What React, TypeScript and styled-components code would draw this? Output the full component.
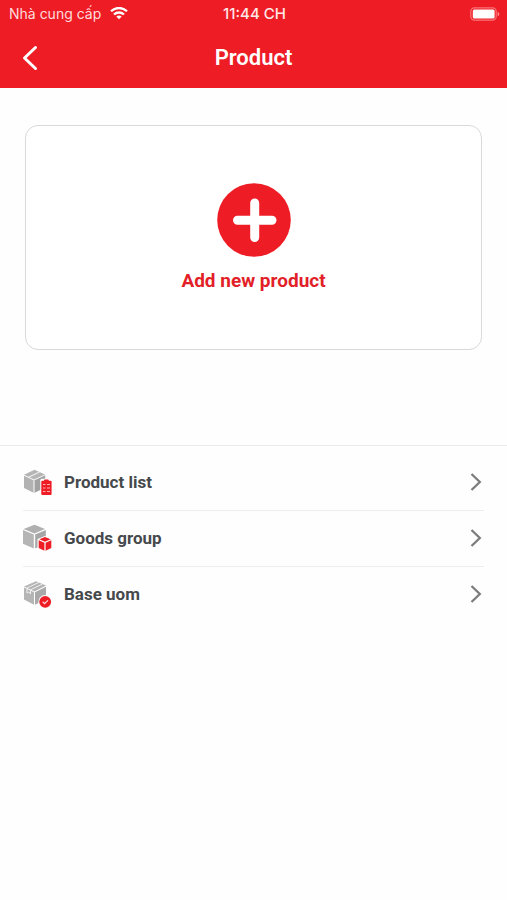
import React from "react";
import styled, { createGlobalStyle } from "styled-components";

const GlobalStyle = createGlobalStyle`
  * { box-sizing: border-box; }
  body {
    margin: 0;
    background: #fefefe;
    font-family: Roboto, "Liberation Sans", sans-serif;
  }
`;

const Header = styled.header`
  background: #ee1d25;
  color: #fff;
  padding-bottom: 8px;
`;

const StatusBar = styled.div`
  display: grid;
  grid-template-columns: 1fr auto 1fr;
  align-items: center;
  height: 28px;
  padding: 0 7px 0 9px;
  font: 400 14px/20px Inter, sans-serif;
`;

const Carrier = styled.span`
  display: flex;
  align-items: center;
  gap: 9px;
  color: #ffdcdc;
  white-space: nowrap;
`;

const Clock = styled.time`
  font-size: 15px;
  font-weight: 500;
  color: #ffe8e8;
`;

const Battery = styled.svg`
  justify-self: end;
`;

const TitleBar = styled.div`
  display: grid;
  grid-template-columns: 40px 1fr 40px;
  align-items: center;
  padding: 7px 10px 0;
`;

const IconButton = styled.button`
  display: grid;
  place-items: center;
  width: 40px;
  height: 45px;
  padding: 0;
  border: 0;
  background: none;
  color: inherit;
  cursor: pointer;
`;

const Title = styled.h1`
  margin: 0;
  font-size: 22px;
  line-height: 28px;
  font-weight: 600;
  text-align: center;
`;

const AddCard = styled.button`
  display: flex;
  flex-direction: column;
  align-items: center;
  gap: 10px;
  width: calc(100% - 50px);
  margin: 37px 25px 95px;
  padding: 57px 16px 54px;
  border: 1px solid #d9d9d9;
  border-radius: 13px;
  background: #fff;
  color: #e21f28;
  font: 700 19px/28px Roboto, sans-serif;
  cursor: pointer;
`;

const Menu = styled.nav`
  border-top: 1px solid #ebebeb;
  padding: 9px 23px 0;
`;

const MenuList = styled.ul`
  list-style: none;
  margin: 0;
  padding: 0;
`;

const MenuItem = styled.li`
  & + & {
    border-top: 1px solid #eee;
  }
`;

const MenuLink = styled.a`
  display: flex;
  align-items: center;
  gap: 9px;
  height: 55px;
  padding-bottom: 2px;
  color: #46494c;
  font-size: 17px;
  line-height: 24px;
  font-weight: 700;
  text-decoration: none;
`;

const MenuLabel = styled.span`
  flex: 1;
`;

const WifiIcon = () => (
  <svg width="18" height="14" viewBox="0 1 18 14" fill="none" stroke="#fff" strokeWidth="2.3" aria-hidden="true">
    <path d="M1 5.3C5.5.9 12.5.9 17 5.3" />
    <path d="M4 8.500c2.800-2.700 7.200-2.700 10 0" />
    <path d="M6.300 10.600c1.500-1.400 3.900-1.400 5.400 0L9 13.300z" fill="#fff" stroke="none" />
  </svg>
);

const BatteryIcon = () => (
  <Battery width="30" height="14" viewBox="0 0 30 14" role="img" aria-label="Battery full">
    <rect x="0.800" y="0.800" width="25.400" height="12.400" rx="3.600" fill="none" stroke="#fa7478" strokeWidth="1.200" />
    <rect x="2.800" y="2.600" width="21.800" height="8.800" rx="1.500" fill="#fff" />
    <path d="M27.700 4.700c2 .8 2 3.800 0 4.600z" fill="#ff8f92" />
  </Battery>
);

const BackIcon = () => (
  <svg width="16" height="26" viewBox="0 0 16 26" fill="none" stroke="#fff" strokeWidth="3" strokeLinecap="round" strokeLinejoin="round" aria-hidden="true">
    <path d="M13.500 2.500 2.500 13l11 10.500" />
  </svg>
);

const AddIcon = () => (
  <svg width="74" height="74" viewBox="0 0 74 74" aria-hidden="true">
    <circle cx="37" cy="37" r="36.800" fill="#ee1d25" />
    <path d="M37.700 20v34.500M20.500 37.300h34.500" stroke="#fff" strokeWidth="9" strokeLinecap="round" />
  </svg>
);

const ChevronIcon = () => (
  <svg width="14" height="20" viewBox="1 0 14 20" fill="none" stroke="#7c7c7c" strokeWidth="2.300" aria-hidden="true">
    <path d="m2.500 2 8.300 8-8.300 8" />
  </svg>
);

const ProductListIcon = () => (
  <svg width="32" height="32" viewBox="1 0 32 32" aria-hidden="true">
    <path d="M12.500 3.800 23 8.400 12 13.600 2 8.800z" fill="#b5b5b5" />
    <path d="m2 9.800 9.500 4.500v12.500L2 22z" fill="#b2b2b2" />
    <path d="m12.500 14.300 10.700-5v12.500l-10.700 5z" fill="#a2a2a2" />
    <path d="m6.500 11.200 11-5.200" stroke="#eee" strokeWidth="1.100" />
    <rect x="18.300" y="12.800" width="12" height="17" rx="1.500" fill="#fefefe" />
    <rect x="19.300" y="14.700" width="10.300" height="14.300" rx="1" fill="#ee1d25" />
    <rect x="22" y="13.600" width="4.800" height="2.400" rx="1" fill="#ee1d25" />
    <path d="M21 18.500h2.500M25 18.500h3M21 22h2.500M25 22h3M21 25.500h2.500M25 25.500h3" stroke="#ffb0b3" strokeWidth="1.100" />
  </svg>
);

const GoodsGroupIcon = () => (
  <svg width="32" height="32" viewBox="1 0 32 32" aria-hidden="true">
    <path d="M12.500 2.700 23 7 12.500 11.500 1.600 7z" fill="#b0b0b0" />
    <path d="m1 8 10.800 4.600v14L1 21.800z" fill="#b5b5b5" />
    <path d="m13.200 12.600 10.600-4.500v13.700l-10.600 4.800z" fill="#a6a6a6" />
    <path d="m23 14 7.500 3v9L23 30l-7.500-4v-9z" fill="#fefefe" />
    <path d="m23 15 5.600 2.200L23 19.700l-5.600-2.500z" fill="#ee1d25" />
    <path d="m16.700 18.200 5.700 2.500v8l-5.700-2.700z" fill="#ee1d25" />
    <path d="m23.600 20.700 5.700-2.500V26l-5.700 2.700z" fill="#ee1d25" />
  </svg>
);

const BaseUomIcon = () => (
  <svg width="32" height="32" viewBox="1 0 32 32" aria-hidden="true">
    <path d="M14 3.300 24 7.500 12.500 13.500 2 8.500z" fill="#b5b5b5" />
    <path d="m2 9.500 10 4.800v12.500L2 21.500z" fill="#b5b5b5" />
    <path d="m13 14.300 11-5.500v12.500l-11 5.500z" fill="#a9a9a9" />
    <path d="m5 10 12-5.700M8.500 11.800l12-5.800M5 10v5l1.800-1L8.500 16v-4.200" fill="none" stroke="#efefef" strokeWidth="1" />
    <circle cx="23.200" cy="23.800" r="6.800" fill="#fefefe" />
    <circle cx="23.200" cy="23.800" r="5.900" fill="#ee1d25" />
    <path d="m20.700 23.800 1.900 1.800 3.300-3.300" fill="none" stroke="#ffd9da" strokeWidth="1.200" />
  </svg>
);

const menuItems = [
  { label: "Product list", href: "#product-list", Icon: ProductListIcon },
  { label: "Goods group", href: "#goods-group", Icon: GoodsGroupIcon },
  { label: "Base uom", href: "#base-uom", Icon: BaseUomIcon },
];

export default function App() {
  return (
    <>
      <GlobalStyle />
      <Header>
        <StatusBar>
          <Carrier>
            Nhà cung cấp
            <WifiIcon />
          </Carrier>
          <Clock>11:44 CH</Clock>
          <BatteryIcon />
        </StatusBar>
        <TitleBar>
          <IconButton type="button" aria-label="Back">
            <BackIcon />
          </IconButton>
          <Title>Product</Title>
        </TitleBar>
      </Header>
      <main>
        <AddCard type="button">
          <AddIcon />
          Add new product
        </AddCard>
        <Menu aria-label="Product">
          <MenuList>
            {menuItems.map(({ label, href, Icon }) => (
              <MenuItem key={label}>
                <MenuLink href={href}>
                  <Icon />
                  <MenuLabel>{label}</MenuLabel>
                  <ChevronIcon />
                </MenuLink>
              </MenuItem>
            ))}
          </MenuList>
        </Menu>
      </main>
    </>
  );
}
